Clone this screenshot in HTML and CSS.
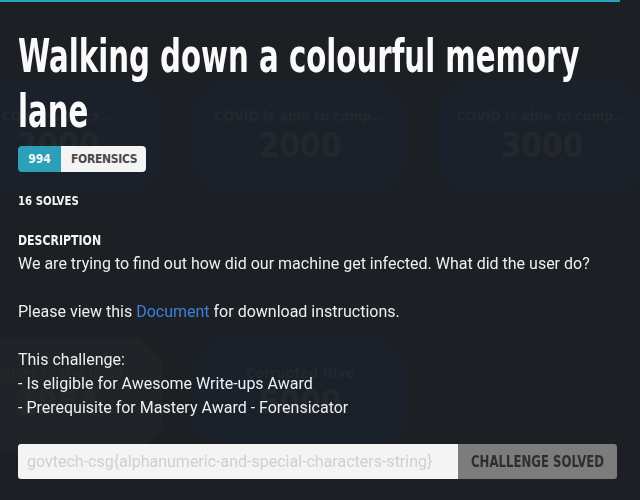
FILE: index.html
```html
<!DOCTYPE html>
<html lang="en">
<head>
<meta charset="utf-8">
<title>Walking down a colourful memory lane</title>
<link rel="stylesheet" href="styles.css">
</head>
<body>
<main class="board">
  <section class="row row-top">
    <div class="card card-blue"><span class="card-name">COVID &amp; Alice...</span><span class="card-value">2000</span></div>
    <div class="card card-blue"><span class="card-name">COVID is able to comp...</span><span class="card-value">2000</span></div>
    <div class="card card-blue"><span class="card-name">COVID is able to comp...</span><span class="card-value">3000</span></div>
  </section>
  <section class="row row-bottom">
    <div class="card card-gray"><span class="card-name">Voices in the head</span><span class="card-value">1964</span></div>
    <div class="card card-blue"><span class="card-name">Corrupted Hive</span><span class="card-value">5000</span></div>
  </section>
</main>

<div class="modal">
  <h1 class="title"><span class="title-text">Walking down a colourful memory lane</span></h1>
  <div class="badge"><span class="badge-value">994</span><span class="badge-cat">FORENSICS</span></div>
  <div class="solves"><span class="narrow">16 SOLVES</span></div>
  <div class="label"><span class="narrow">DESCRIPTION</span></div>
  <div class="desc">
    <p>We are trying to find out how did our machine get infected. What did the user do?</p>
    <p>Please view this <a href="#" class="link">Document</a> for download instructions.</p>
    <p>This challenge:<br>- Is eligible for Awesome Write-ups Award<br>- Prerequisite for Mastery Award - Forensicator</p>
  </div>
  <form class="submit">
    <input class="flag" type="text" placeholder="govtech-csg{alphanumeric-and-special-characters-string}">
    <button class="solved" type="button"><span class="narrow narrow-center">CHALLENGE SOLVED</span></button>
  </form>
</div>
</body>
</html>
```
FILE: styles.css
```css
html, body {
  margin: 0;
  padding: 0;
  background: #1c1f23;
  width: 640px;
  height: 500px;
  overflow: hidden;
}

.board {
  padding-top: 80px;
  margin-left: -47px;
}

.row {
  display: flex;
  gap: 32px;
}

.row-bottom {
  margin-top: 142px;
}

.card {
  flex: 0 0 210px;
  height: 115px;
  display: flex;
  flex-direction: column;
  align-items: center;
  clip-path: polygon(24px 0, 186px 0, 210px 24px, 210px 91px, 186px 115px, 24px 115px, 0 91px, 0 24px);
  font-family: "DejaVu Sans Condensed", "DejaVu Sans", sans-serif;
  font-weight: 700;
  color: #24282c;
}

.card-blue { background: #1a212a; }
.card-gray { background: #202327; }

.card-name {
  font-size: 14px;
  margin-top: 28px;
  white-space: nowrap;
}

.card-value {
  font-size: 33px;
  margin-top: 2px;
}

.modal {
  position: fixed;
  top: 0;
  left: 0;
  width: 620px;
  height: 500px;
  box-sizing: border-box;
  border-top: 2px solid #2aa0b9;
  padding: 27px 0 0 18px;
  font-family: Roboto, "Liberation Sans", sans-serif;
  color: #eceef0;
}

.title {
  margin: 0;
  height: 110px;
  font-family: "DejaVu Sans Condensed", "DejaVu Sans", sans-serif;
  font-weight: 700;
  font-size: 46px;
  line-height: 55px;
  color: #fafafa;
}

.title-text {
  display: block;
  width: 830px;
  transform: scaleX(0.706);
  transform-origin: 0 0;
}

.narrow {
  display: inline-block;
  transform: scaleX(0.87);
  transform-origin: 0 50%;
  white-space: nowrap;
}

.narrow-center {
  transform-origin: 50% 50%;
}

.badge {
  display: inline-flex;
  margin-top: 7px;
  height: 26px;
  border-radius: 4px;
  overflow: hidden;
  font-family: "DejaVu Sans Condensed", "DejaVu Sans", sans-serif;
  font-weight: 700;
  font-size: 12px;
  line-height: 26px;
}

.badge-value {
  background: #2ba0b8;
  color: #f4f8fa;
  width: 43px;
  text-align: center;
}

.badge-cat {
  background: #f4f4f4;
  color: #4a4a4a;
  padding: 0 9px 0 10px;
  letter-spacing: -0.3px;
}

.solves, .label {
  font-family: "DejaVu Sans Condensed", "DejaVu Sans", sans-serif;
  font-weight: 700;
  color: #f5f5f5;
}

.solves {
  margin-top: 21px;
  font-size: 13px;
  line-height: 16px;
}

.label {
  margin-top: 23px;
  font-size: 14px;
  line-height: 16px;
}

.desc {
  margin-top: 4px;
  font-size: 16px;
  line-height: 24px;
}

.desc p {
  margin: 0 0 24px;
}

.link {
  color: #3b80dc;
  text-decoration: none;
}

.submit {
  display: flex;
  width: 599px;
  height: 35px;
  margin-top: 17px;
}

.flag {
  flex: 1;
  border: 0;
  margin: 0;
  background: #f4f4f4;
  border-radius: 3px 0 0 3px;
  padding: 0 9px;
  font-family: Roboto, "Liberation Sans", sans-serif;
  font-size: 16px;
  color: #333;
  outline: none;
}

.flag::placeholder {
  color: #cfcfcf;
}

.solved {
  flex: 0 0 159px;
  border: 0;
  margin: 0;
  background: #7c7c7c;
  border-radius: 0 3px 3px 0;
  font-family: "DejaVu Sans Condensed", "DejaVu Sans", sans-serif;
  font-weight: 700;
  font-size: 15px;
  color: #2e2e2e;
  padding: 0;
}
```
